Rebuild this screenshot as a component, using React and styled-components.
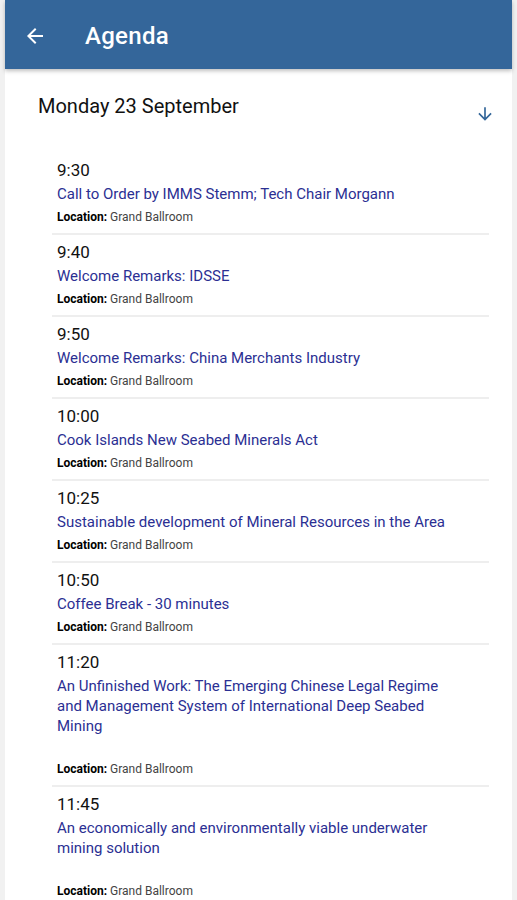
import React from "react";
import styled, { createGlobalStyle } from "styled-components";

const GlobalStyle = createGlobalStyle`
  html, body {
    margin: 0;
    padding: 0;
    background: #f1f1f1;
    font-family: Roboto, "Liberation Sans", Arial, sans-serif;
  }
`;

const sessions = [
  { time: "9:30", title: "Call to Order by IMMS Stemm; Tech Chair Morgann" },
  { time: "9:40", title: "Welcome Remarks: IDSSE" },
  { time: "9:50", title: "Welcome Remarks: China Merchants Industry" },
  { time: "10:00", title: "Cook Islands New Seabed Minerals Act" },
  {
    time: "10:25",
    title: "Sustainable development of Mineral Resources in the Area",
  },
  { time: "10:50", title: "Coffee Break - 30 minutes" },
  {
    time: "11:20",
    title:
      "An Unfinished Work: The Emerging Chinese Legal Regime and Management System of International Deep Seabed Mining",
    long: true,
  },
  {
    time: "11:45",
    title:
      "An economically and environmentally viable underwater mining solution",
    long: true,
  },
];

function App() {
  return (
    <>
      <GlobalStyle />
      <Screen>
        <AppBar>
          <BackButton aria-label="Back">
            <svg width="24" height="24" viewBox="0 0 24 24" fill="#fff">
              <path d="M20 11H7.83l5.59-5.59L12 4l-8 8 8 8 1.41-1.41L7.83 13H20v-2z" />
            </svg>
          </BackButton>
          <Title>Agenda</Title>
        </AppBar>
        <Content>
          <DayHeader>
            <DayTitle>Monday 23 September</DayTitle>
            <svg width="20" height="20" viewBox="0 0 24 24" fill="#336699">
              <path d="M20 12l-1.41-1.41L13 16.17V4h-2v12.17l-5.58-5.59L4 12l8 8 8-8z" />
            </svg>
          </DayHeader>
          <SessionList>
            {sessions.map((s) => (
              <Session key={s.time}>
                <Time>{s.time}</Time>
                <SessionTitle $long={s.long}>{s.title}</SessionTitle>
                <Location>
                  <strong>Location:</strong> Grand Ballroom
                </Location>
              </Session>
            ))}
          </SessionList>
        </Content>
      </Screen>
    </>
  );
}

const Screen = styled.div`
  margin: 0 5px;
  min-height: 900px;
  background: #fff;
`;

const AppBar = styled.header`
  height: 69px;
  background: #34669a;
  display: flex;
  align-items: center;
  padding-left: 18px;
  box-shadow: 0 2px 4px rgba(0, 0, 0, 0.25);
  position: relative;
  z-index: 1;
`;

const BackButton = styled.button`
  background: transparent;
  border: none;
  padding: 0;
  display: flex;
  margin-top: 2px;
  cursor: pointer;
`;

const Title = styled.h1`
  margin: 2px 0 0 38px;
  color: #fff;
  font-size: 24px;
  font-weight: 500;
  letter-spacing: 0.3px;
`;

const Content = styled.main`
  background: #fff;
`;

const DayHeader = styled.div`
  display: flex;
  justify-content: space-between;
  align-items: flex-start;
  padding: 24px 17px 0 33px;
  height: 84px;
  box-sizing: border-box;

  svg {
    margin-top: 11px;
  }
`;

const DayTitle = styled.h2`
  margin: 0;
  font-size: 20px;
  font-weight: 400;
  line-height: 26px;
  color: #111;
`;

const SessionList = styled.ul`
  list-style: none;
  margin: 0 23px 0 47px;
  padding: 0;
`;

const Session = styled.li`
  padding: 5px 5px 8px;
  border-bottom: 2px solid #eeeeee;
  display: flex;
  flex-direction: column;
`;

const Time = styled.div`
  font-size: 17px;
  line-height: 24px;
  color: #111;
`;

const SessionTitle = styled.div`
  margin-top: 2px;
  padding-bottom: ${(p) => (p.$long ? "20px" : "0")};
  font-size: 15px;
  line-height: 20px;
  color: #2b2f93;
  max-width: 392px;
`;

const Location = styled.div`
  margin-top: 5px;
  font-size: 12px;
  line-height: 16px;
  color: #444;

  strong {
    color: #000;
    font-weight: 700;
  }
`;

export default App;
